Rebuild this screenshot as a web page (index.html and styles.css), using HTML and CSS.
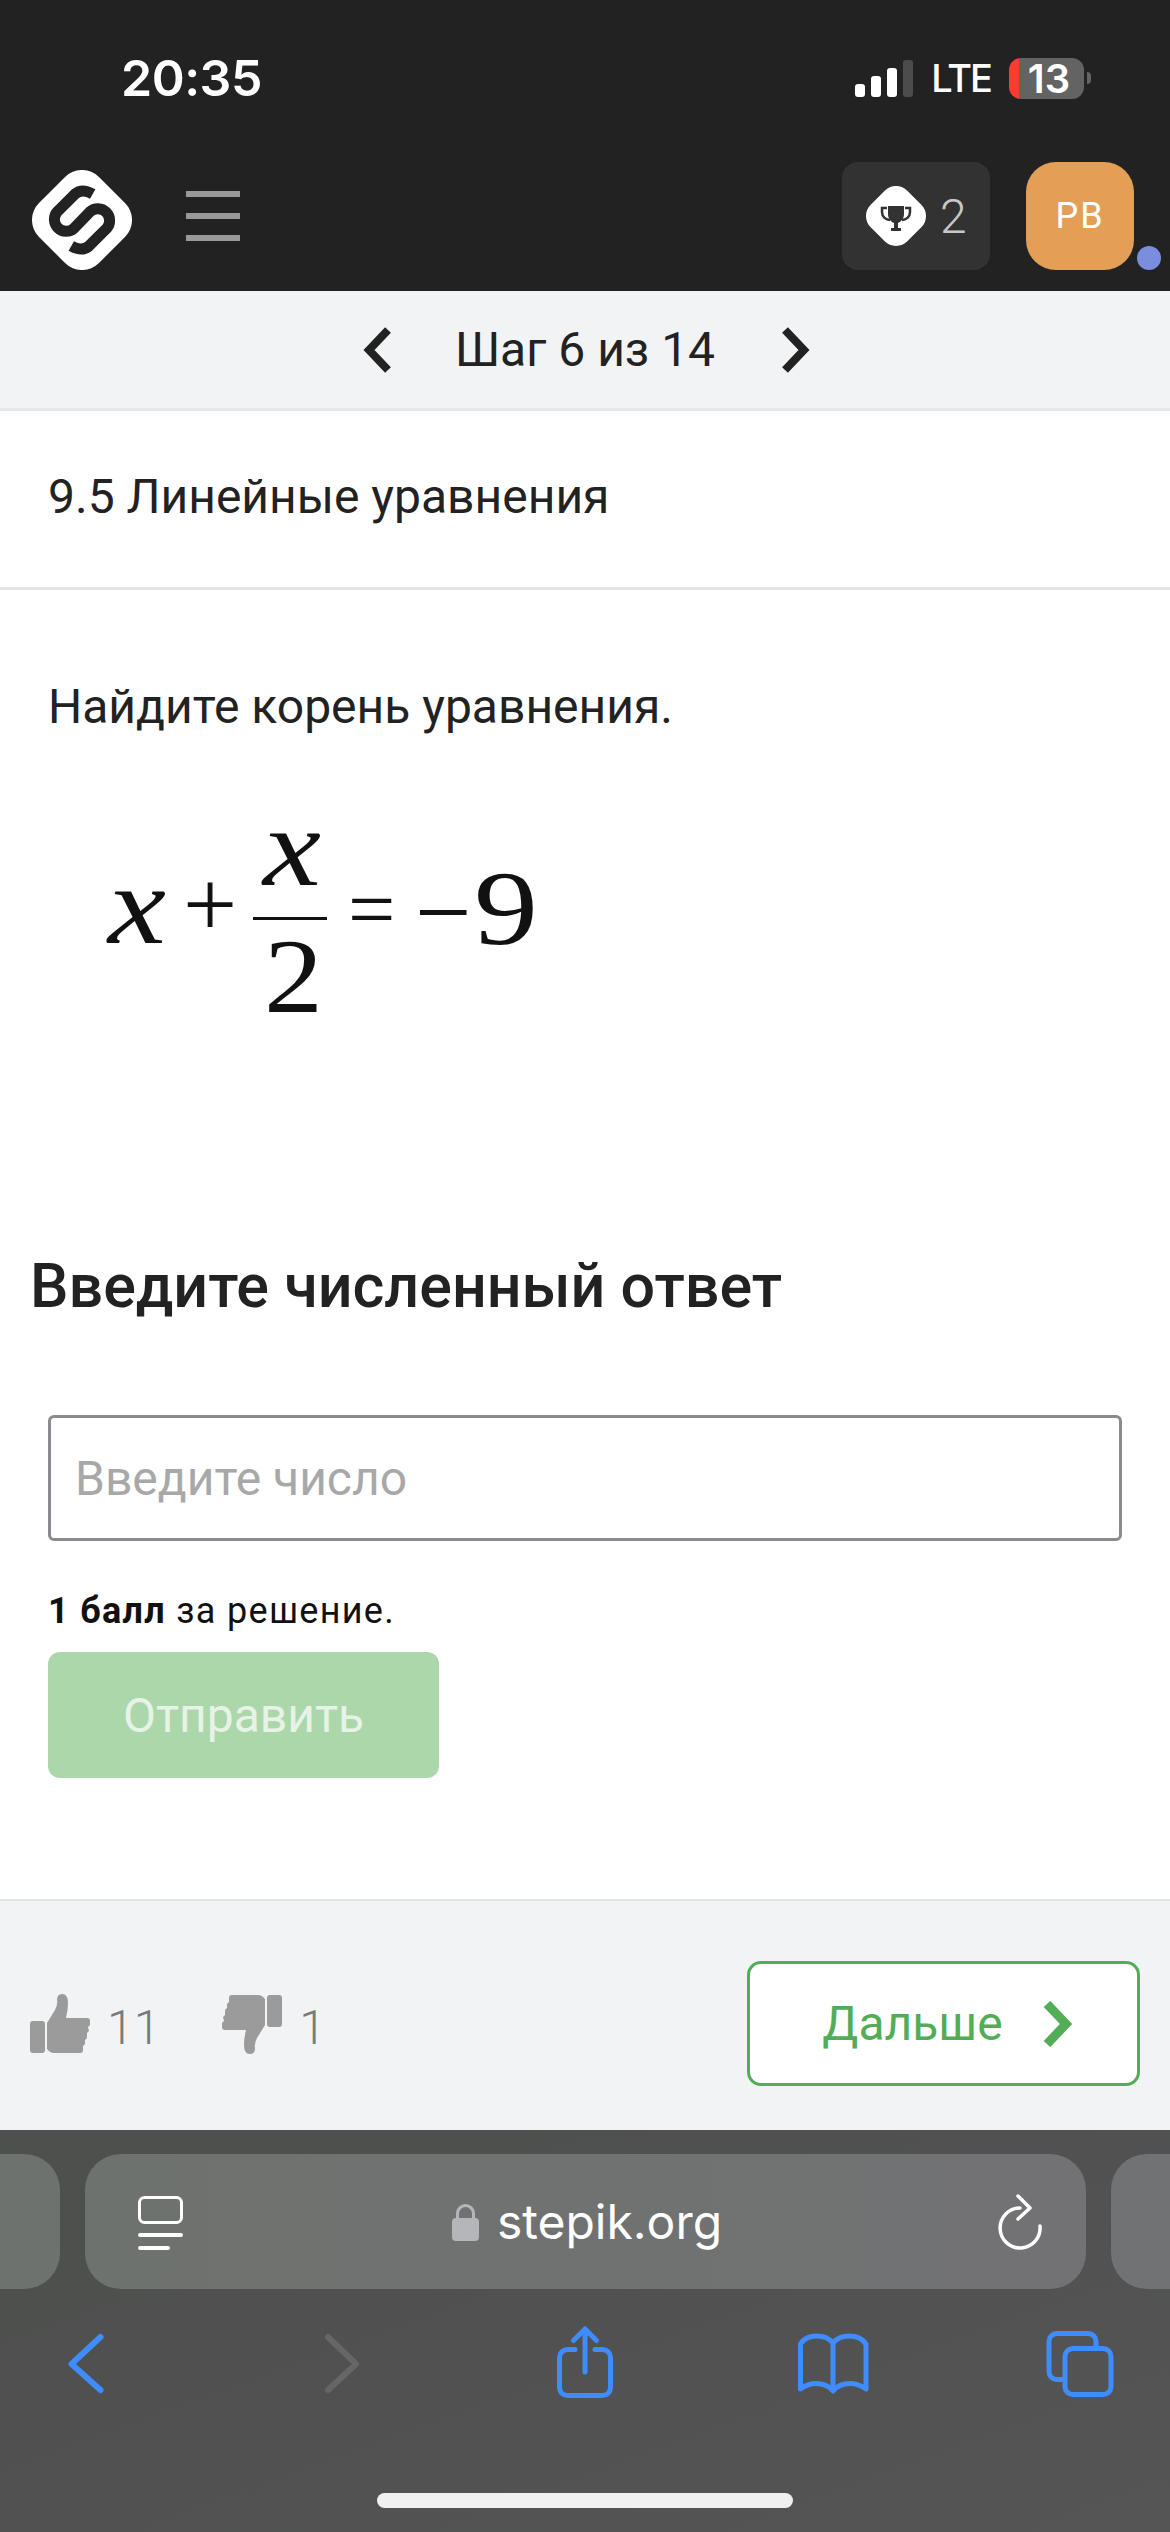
FILE: index.html
```html
<!DOCTYPE html>
<html lang="ru">
<head>
<meta charset="utf-8">
<title>Stepik</title>
<link rel="stylesheet" href="styles.css">
</head>
<body>
<div class="phone">
  <header class="top">
    <div class="status">
      <span class="time">20:35</span>
      <div class="sys">
        <div class="signal"><i class="b1"></i><i class="b2"></i><i class="b3"></i><i class="b4"></i></div>
        <span class="lte">LTE</span>
        <div class="battery"><span>13</span></div>
        <i class="nub"></i>
      </div>
    </div>
    <div class="nav">
      <svg class="logo" viewBox="0 0 100 100"><rect x="7.6" y="7.6" width="84.800" height="84.800" rx="24" fill="#fff" transform="rotate(45 50 50)"/><path d="M60.700 24Q50 18 43 24L25.300 41.700A11.800 11.800 0 0 0 42 58.300L58 41.700A11.800 11.800 0 0 1 74.700 58.300L57 76Q50 82 39.300 76" fill="none" stroke="#222" stroke-width="11"/></svg>
      <div class="burger"><i></i><i></i><i></i></div>
      <div class="spacer"></div>
      <div class="cert">
        <svg class="cert-icon" viewBox="0 0 60 60"><rect x="4.1" y="4.1" width="51.800" height="51.800" rx="16" fill="#fff" transform="rotate(45 30 30)"/><path d="M22 20H38V28C38 33 34.500 36 32 37V42H35V45H25V42H28V37C25.500 36 22 33 22 28Z" fill="#323232"/><path d="M21 22H16V26C16 31 20 34 24 34M39 22H44V26C44 31 40 34 36 34" fill="none" stroke="#323232" stroke-width="2.500"/></svg>
        <span class="cert-n">2</span>
      </div>
      <div class="avatar">PB<i class="dot"></i></div>
    </div>
  </header>

  <div class="stepbar">
    <svg class="chev prev" viewBox="0 0 30 46"><path d="M26 3L7 23L26 43" fill="none" stroke="#222" stroke-width="8"/></svg>
    <span class="step">Шаг 6 из 14</span>
    <svg class="chev" viewBox="0 0 30 46"><path d="M4 3L23 23L4 43" fill="none" stroke="#222" stroke-width="8"/></svg>
  </div>

  <div class="lesson">9.5 Линейные уравнения</div>

  <main class="content">
    <p class="question">Найдите корень уравнения.</p>
    <svg class="equation" viewBox="0 -40 500 280" width="500" height="280">
      <text class="eq-i" x="60" y="134" font-size="113" textLength="58" lengthAdjust="spacingAndGlyphs">x</text>
      <text class="eq" x="135" y="127" font-size="96">+</text>
      <text class="eq-i" x="215" y="76" font-size="113" textLength="58" lengthAdjust="spacingAndGlyphs">x</text>
      <rect x="205" y="108" width="74" height="3" fill="#111"/>
      <text class="eq" x="216" y="203" font-size="106" textLength="59" lengthAdjust="spacingAndGlyphs">2</text>
      <text class="eq" x="300" y="129" font-size="84">=</text>
      <text class="eq" x="367" y="137" font-size="100">−</text>
      <text class="eq" x="426" y="135" font-size="105" textLength="64" lengthAdjust="spacingAndGlyphs">9</text>
    </svg>
    <h2 class="answer-title">Введите численный ответ</h2>
    <input class="answer" type="text" placeholder="Введите число">
    <p class="points"><b>1 балл</b> за решение.</p>
    <button class="send" type="button">Отправить</button>
  </main>

  <footer class="foot">
    <div class="votes">
      <svg class="thumb" viewBox="0 0 60 60"><rect x="0" y="27" width="15" height="32" rx="3"/><path d="M17 29L25 16Q28 10 27 6Q27 0 32 0Q38 0 38 9Q38 16 36 24L57 24Q60 24 60 27L60 31L58 33L59 37L57 39L57 44L55 46L55 50L53 52L53 56Q53 59 50 59L24 59Q20 59 17 55Z"/></svg>
      <span class="count">11</span>
      <svg class="thumb down" viewBox="0 0 60 60"><rect x="0" y="27" width="15" height="32" rx="3"/><path d="M17 29L25 16Q28 10 27 6Q27 0 32 0Q38 0 38 9Q38 16 36 24L57 24Q60 24 60 27L60 31L58 33L59 37L57 39L57 44L55 46L55 50L53 52L53 56Q53 59 50 59L24 59Q20 59 17 55Z"/></svg>
      <span class="count">1</span>
    </div>
    <a class="next">Дальше<svg class="next-chev" viewBox="0 0 30 46"><path d="M4 3L23 23L4 43" fill="none" stroke="#53ad56" stroke-width="9"/></svg></a>
  </footer>

  <section class="safari">
    <div class="urlrow">
      <div class="stub left"></div>
      <div class="url">
        <svg class="tabs-ic" viewBox="0 0 45 52"><rect x="1.500" y="1.500" width="42" height="25" rx="5" fill="none" stroke="#fff" stroke-width="3"/><rect x="0" y="37" width="45" height="4" rx="2" fill="#fff"/><rect x="0" y="50" width="32" height="4" rx="2" fill="#fff"/></svg>
        <div class="addr">
          <svg class="lock" viewBox="0 0 27 38"><path d="M5.500 18V10.500A8 8 0 0 1 21.500 10.500V18" fill="none" stroke="#b5b6b9" stroke-width="3"/><rect x="0" y="15" width="27" height="23" rx="4" fill="#b5b6b9"/></svg>
          <span>stepik.org</span>
        </div>
        <svg class="reload" viewBox="0 0 44 53"><path d="M22 13A20 20 0 1 0 42 31" fill="none" stroke="#fff" stroke-width="3.500" stroke-linecap="round"/><path d="M20 1L32 13L20 24" fill="none" stroke="#fff" stroke-width="3.500" stroke-linecap="round" stroke-linejoin="round"/></svg>
      </div>
      <div class="stub right"></div>
    </div>
    <div class="tools">
      <svg class="tool" viewBox="0 0 80 80"><path d="M54.500 12L25.500 39L54.500 65" fill="none" stroke="#3f8cff" stroke-width="6" stroke-linecap="round" stroke-linejoin="round"/></svg>
      <svg class="tool" viewBox="0 0 80 80"><path d="M33 12L61 39L33 65" fill="none" stroke="#666" stroke-width="6" stroke-linecap="round" stroke-linejoin="round"/></svg>
      <svg class="tool" viewBox="0 0 80 80"><g fill="none" stroke="#3f8cff" stroke-width="5" stroke-linecap="round" stroke-linejoin="round"><path d="M32 24.500H24.500A8 8 0 0 0 16.500 32.500V62.500A8 8 0 0 0 24.500 70.500H59.500A8 8 0 0 0 67.500 62.500V32.500A8 8 0 0 0 59.500 24.500H52"/><path d="M42 47V4M30.500 15.500L42 4L53.500 15.500"/></g></svg>
      <svg class="tool" viewBox="0 0 80 80"><path d="M41 18V64M41 18C37 13 31 11 25 11C18 11 12 13 8.500 19V64C14 60 20 58.500 24 58.500C31 58.500 37 61 41 66C45 61 51 58.500 58 58.500C62 58.500 68 60 74 64V19C70 13 64 11 57 11C51 11 45 13 41 18Z" fill="none" stroke="#3f8cff" stroke-width="5" stroke-linecap="round" stroke-linejoin="round"/></svg>
      <svg class="tool" viewBox="0 0 80 80"><g fill="none" stroke="#3f8cff" stroke-width="5" stroke-linecap="round"><path d="M23 54.500H17A8 8 0 0 1 9 46.500V16.500A8 8 0 0 1 17 8.500H48A8 8 0 0 1 56 16.500V23"/><rect x="25" y="23.500" width="46" height="46" rx="8"/></g></svg>
    </div>
    <div class="home"></div>
  </section>
</div>
</body>
</html>
```

FILE: styles.css
```css
* { box-sizing: border-box; }
html, body { margin: 0; padding: 0; background: #fff; }
.phone {
  width: 1170px;
  height: 2532px;
  overflow: hidden;
  display: flex;
  flex-direction: column;
  font-family: Roboto, "Noto Sans", sans-serif;
  color: #222;
}

/* status bar + site header */
.top { height: 291px; background: #222; flex: none; }
.status {
  height: 156px;
  padding: 0 79px 0 121px;
  display: flex;
  align-items: center;
  justify-content: space-between;
  font-family: Inter, sans-serif;
  color: #fff;
}
.time { font-size: 50px; font-weight: 600; letter-spacing: -0.5px; }
.sys { display: flex; align-items: center; }
.signal { display: flex; align-items: flex-end; gap: 6px; height: 37px; }
.signal i { display: block; width: 10px; background: #fff; border-radius: 3px; }
.signal .b1 { height: 13px; }
.signal .b2 { height: 21px; }
.signal .b3 { height: 29px; }
.signal .b4 { height: 37px; background: #4c4c4c; }
.lte { margin-left: 18px; font-size: 38px; font-weight: 500; line-height: 40px; letter-spacing: -2px; }
.battery {
  margin-left: 18px;
  width: 75px;
  height: 41px;
  border-radius: 12px;
  background: linear-gradient(90deg, #ff3b30 10px, #636363 10px);
  display: flex;
  align-items: center;
  justify-content: center;
  padding-left: 5px;
  font-size: 40px;
  font-weight: 600;
}
.nub { width: 4px; height: 12px; margin-left: 3px; background: #636363; border-radius: 0 6px 6px 0; }

.nav { height: 108px; margin-top: 6px; display: flex; align-items: center; padding-left: 32px; }
.logo { width: 100px; height: 100px; flex: none; margin-top: 7px; }
.burger { margin-left: 54px; width: 54px; display: flex; flex-direction: column; gap: 16px; }
.burger i { display: block; height: 6px; background: #999; }
.spacer { flex: 1; }
.cert {
  width: 148px;
  height: 108px;
  background: #323232;
  border-radius: 16px;
  display: flex;
  align-items: center;
  padding-left: 24px;
  gap: 14px;
}
.cert-icon { width: 60px; height: 60px; flex: none; }
.cert-n { font-size: 48px; font-weight: 300; color: #c8c8c8; }
.avatar {
  position: relative;
  width: 108px;
  height: 108px;
  margin: 0 36px;
  background: #e29f55;
  border-radius: 30px;
  color: #fff;
  font-size: 36px;
  letter-spacing: 2px;
  display: flex;
  align-items: center;
  justify-content: center;
}
.dot { position: absolute; left: 111px; bottom: 0; width: 24px; height: 24px; border-radius: 50%; background: #7b8ede; }

/* step switcher */
.stepbar {
  height: 120px;
  flex: none;
  background: #f2f3f5;
  border-bottom: 3px solid #e6e7ea;
  display: flex;
  align-items: center;
  justify-content: center;
  gap: 66px;
  padding-left: 3px;
}
.chev { width: 30px; height: 46px; flex: none; }
.chev.prev { margin-right: -3px; }
.step { font-size: 48px; color: #222; }

.lesson {
  height: 179px;
  flex: none;
  border-bottom: 3px solid #e3e4e6;
  padding: 0 0 6px 48px;
  display: flex;
  align-items: center;
  font-size: 48px;
  color: #222;
}

.content { flex: 1; display: flex; flex-direction: column; align-items: flex-start; padding: 0 48px; }
.question { margin: 87px 0 0; font-size: 48px; line-height: 60px; color: #222; }
.equation { display: block; margin: 32px 0 0; flex: none; }
.eq { font-family: "Liberation Serif", serif; fill: #111; }
.eq-i { font-family: "Liberation Serif", serif; font-style: italic; fill: #111; }
.answer-title { margin: 201px 0 0 -18px; font-size: 61px; line-height: 72px; font-weight: 500; color: #222; }
.answer {
  display: block;
  width: 1074px;
  height: 126px;
  margin: 93px 0 0;
  padding: 0 24px;
  border: 3px solid #8a8a8f;
  border-radius: 6px;
  background: #fff;
  font-family: Roboto, sans-serif;
  font-size: 48px;
  outline: none;
}
.answer::placeholder { color: #a8a8a8; opacity: 1; }
.points { margin: 50px 0 0; font-size: 36px; line-height: 40px; letter-spacing: 1.3px; color: #111; }
.points b { font-weight: 700; }
.send {
  display: block;
  width: 391px;
  height: 126px;
  margin-top: 21px;
  border: 0;
  border-radius: 12px;
  background: #acd7ab;
  color: #e6f3e6;
  font-family: Roboto, sans-serif;
  font-size: 48px;
}

/* lesson footer */
.foot {
  height: 231px;
  flex: none;
  background: #f2f3f5;
  border-top: 2px solid #e2e3e6;
  padding: 60px 30px 44px;
  display: flex;
  align-items: center;
  justify-content: space-between;
}
.votes { display: flex; align-items: center; }
.thumb { width: 60px; height: 60px; fill: #9b9b9b; flex: none; }
.thumb.down { transform: rotate(180deg); margin-left: 62px; }
.count { margin-left: 17px; padding-top: 8px; font-size: 48px; font-weight: 300; color: #7a7a7a; }
.next {
  width: 393px;
  height: 125px;
  padding-left: 8px;
  background: #fff;
  border: 3.500px solid #53ad56;
  border-radius: 14px;
  display: flex;
  align-items: center;
  justify-content: center;
  gap: 40px;
  color: #53ad56;
  font-size: 48px;
}
.next-chev { width: 30px; height: 46px; flex: none; }

/* browser chrome */
.safari {
  height: 402px;
  flex: none;
  background: linear-gradient(160deg, #4d504d 0%, #4f504f 35%, #555556 100%);
}
.urlrow { display: flex; gap: 25px; padding-top: 24px; height: 159px; }
.stub { height: 135px; flex: none; background: #6e726e; }
.stub.left { width: 60px; border-radius: 0 36px 36px 0; }
.stub.right { width: 59px; background: #717274; border-radius: 36px 0 0 36px; }
.url {
  flex: 1;
  height: 135px;
  border-radius: 36px;
  background: linear-gradient(90deg, #6e726e, #727274);
  padding: 0 44px 0 53px;
  display: grid;
  grid-template-columns: 1fr auto 1fr;
  align-items: center;
}
.tabs-ic { width: 45px; height: 54px; overflow: visible; }
.addr { display: flex; align-items: center; gap: 18px; padding-right: 6px; color: #fff; font-family: Inter, sans-serif; font-size: 48px; }
.lock { width: 27px; height: 38px; flex: none; }
.reload { width: 44px; height: 53px; justify-self: end; overflow: visible; }
.tools { display: flex; justify-content: space-between; padding: 0 50px 0 46px; margin-top: 36px; }
.tool { width: 80px; height: 80px; flex: none; }
.home { width: 416px; height: 15px; margin: 88px auto 0; background: #f0f0f0; border-radius: 8px; }
```
